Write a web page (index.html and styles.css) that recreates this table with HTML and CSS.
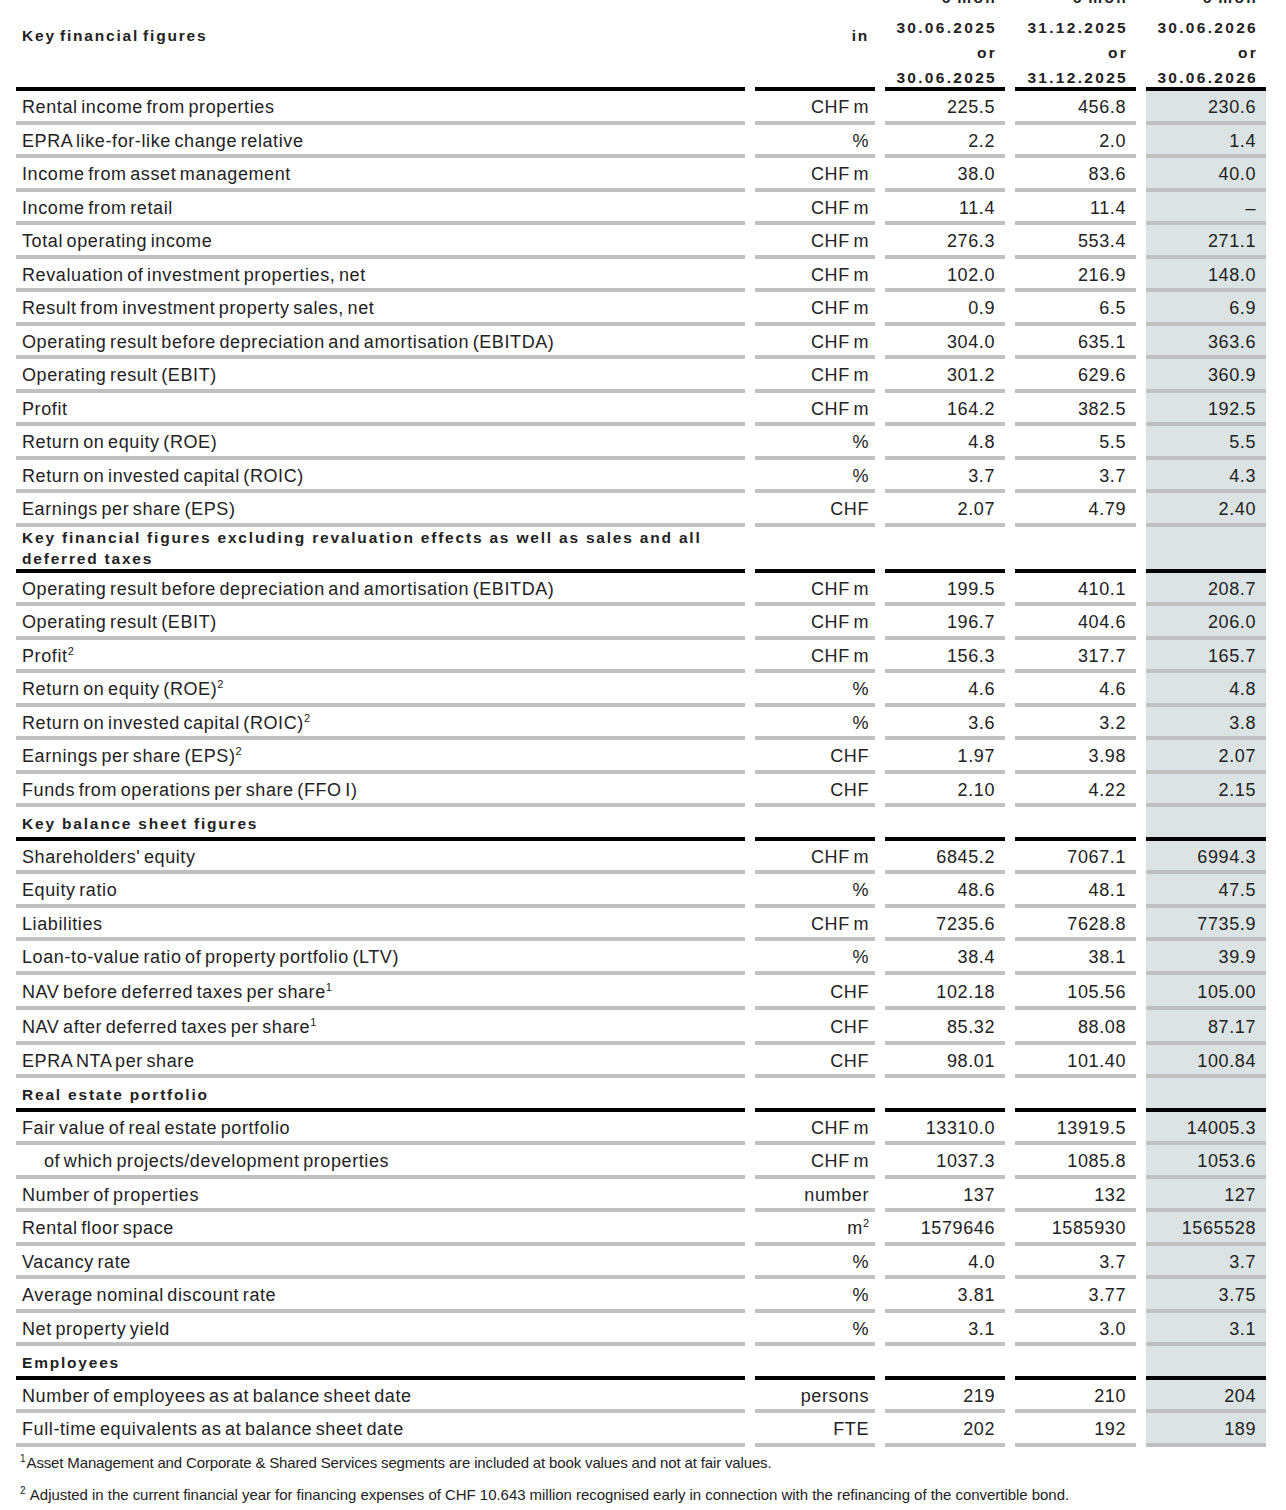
FILE: index.html
```html
<!DOCTYPE html>
<html lang="en">
<head>
    <meta charset="UTF-8">
    <title>Key financial figures</title>
    <link rel="stylesheet" href="styles.css">
</head>
<body>
    <div class="tabla">
        <div class="fila cabecera">
            <div class="titulo">Key financial figures</div>
            <div class="unidad-cab">in</div>
            <div class="fecha"><span class="periodo">6 mon</span><span>30.06.2025</span><span class="or">or</span><span>30.06.2025</span></div>
            <div class="fecha"><span class="periodo">6 mon</span><span>31.12.2025</span><span class="or">or</span><span>31.12.2025</span></div>
            <div class="fecha"><span class="periodo">6 mon</span><span>30.06.2026</span><span class="or">or</span><span>30.06.2026</span></div>
        </div>

        <div class="fila"><div>Rental income from properties</div><div>CHF m</div><div>225.5</div><div>456.8</div><div>230.6</div></div>
        <div class="fila"><div>EPRA like-for-like change relative</div><div>%</div><div>2.2</div><div>2.0</div><div>1.4</div></div>
        <div class="fila"><div>Income from asset management</div><div>CHF m</div><div>38.0</div><div>83.6</div><div>40.0</div></div>
        <div class="fila"><div>Income from retail</div><div>CHF m</div><div>11.4</div><div>11.4</div><div>–</div></div>
        <div class="fila"><div>Total operating income</div><div>CHF m</div><div>276.3</div><div>553.4</div><div>271.1</div></div>
        <div class="fila"><div>Revaluation of investment properties, net</div><div>CHF m</div><div>102.0</div><div>216.9</div><div>148.0</div></div>
        <div class="fila"><div>Result from investment property sales, net</div><div>CHF m</div><div>0.9</div><div>6.5</div><div>6.9</div></div>
        <div class="fila"><div>Operating result before depreciation and amortisation (EBITDA)</div><div>CHF m</div><div>304.0</div><div>635.1</div><div>363.6</div></div>
        <div class="fila"><div>Operating result (EBIT)</div><div>CHF m</div><div>301.2</div><div>629.6</div><div>360.9</div></div>
        <div class="fila"><div>Profit</div><div>CHF m</div><div>164.2</div><div>382.5</div><div>192.5</div></div>
        <div class="fila"><div>Return on equity (ROE)</div><div>%</div><div>4.8</div><div>5.5</div><div>5.5</div></div>
        <div class="fila"><div>Return on invested capital (ROIC)</div><div>%</div><div>3.7</div><div>3.7</div><div>4.3</div></div>
        <div class="fila"><div>Earnings per share (EPS)</div><div>CHF</div><div>2.07</div><div>4.79</div><div>2.40</div></div>

        <div class="fila seccion doble"><div>Key financial figures excluding revaluation effects as well as sales and all deferred taxes</div><div></div><div></div><div></div><div></div></div>
        <div class="fila"><div>Operating result before depreciation and amortisation (EBITDA)</div><div>CHF m</div><div>199.5</div><div>410.1</div><div>208.7</div></div>
        <div class="fila"><div>Operating result (EBIT)</div><div>CHF m</div><div>196.7</div><div>404.6</div><div>206.0</div></div>
        <div class="fila"><div>Profit<sup>2</sup></div><div>CHF m</div><div>156.3</div><div>317.7</div><div>165.7</div></div>
        <div class="fila"><div>Return on equity (ROE)<sup>2</sup></div><div>%</div><div>4.6</div><div>4.6</div><div>4.8</div></div>
        <div class="fila"><div>Return on invested capital (ROIC)<sup>2</sup></div><div>%</div><div>3.6</div><div>3.2</div><div>3.8</div></div>
        <div class="fila"><div>Earnings per share (EPS)<sup>2</sup></div><div>CHF</div><div>1.97</div><div>3.98</div><div>2.07</div></div>
        <div class="fila"><div>Funds from operations per share (FFO I)</div><div>CHF</div><div>2.10</div><div>4.22</div><div>2.15</div></div>

        <div class="fila seccion"><div>Key balance sheet figures</div><div></div><div></div><div></div><div></div></div>
        <div class="fila"><div>Shareholders' equity</div><div>CHF m</div><div>6845.2</div><div>7067.1</div><div>6994.3</div></div>
        <div class="fila"><div>Equity ratio</div><div>%</div><div>48.6</div><div>48.1</div><div>47.5</div></div>
        <div class="fila"><div>Liabilities</div><div>CHF m</div><div>7235.6</div><div>7628.8</div><div>7735.9</div></div>
        <div class="fila"><div>Loan-to-value ratio of property portfolio (LTV)</div><div>%</div><div>38.4</div><div>38.1</div><div>39.9</div></div>
        <div class="fila alta"><div>NAV before deferred taxes per share<sup>1</sup></div><div>CHF</div><div>102.18</div><div>105.56</div><div>105.00</div></div>
        <div class="fila alta"><div>NAV after deferred taxes per share<sup>1</sup></div><div>CHF</div><div>85.32</div><div>88.08</div><div>87.17</div></div>
        <div class="fila"><div>EPRA NTA per share</div><div>CHF</div><div>98.01</div><div>101.40</div><div>100.84</div></div>

        <div class="fila seccion"><div>Real estate portfolio</div><div></div><div></div><div></div><div></div></div>
        <div class="fila"><div>Fair value of real estate portfolio</div><div>CHF m</div><div>13310.0</div><div>13919.5</div><div>14005.3</div></div>
        <div class="fila"><div class="sangria">of which projects/development properties</div><div>CHF m</div><div>1037.3</div><div>1085.8</div><div>1053.6</div></div>
        <div class="fila"><div>Number of properties</div><div>number</div><div>137</div><div>132</div><div>127</div></div>
        <div class="fila"><div>Rental floor space</div><div>m<sup>2</sup></div><div>1579646</div><div>1585930</div><div>1565528</div></div>
        <div class="fila"><div>Vacancy rate</div><div>%</div><div>4.0</div><div>3.7</div><div>3.7</div></div>
        <div class="fila"><div>Average nominal discount rate</div><div>%</div><div>3.81</div><div>3.77</div><div>3.75</div></div>
        <div class="fila"><div>Net property yield</div><div>%</div><div>3.1</div><div>3.0</div><div>3.1</div></div>

        <div class="fila seccion"><div>Employees</div><div></div><div></div><div></div><div></div></div>
        <div class="fila"><div>Number of employees as at balance sheet date</div><div>persons</div><div>219</div><div>210</div><div>204</div></div>
        <div class="fila"><div>Full-time equivalents as at balance sheet date</div><div>FTE</div><div>202</div><div>192</div><div>189</div></div>
    </div>

    <div class="notas">
        <p><sup>1</sup>Asset Management and Corporate &amp; Shared Services segments are included at book values and not at fair values.</p>
        <p class="nota-larga"><sup>2</sup> Adjusted in the current financial year for financing expenses of CHF 10.643 million recognised early in connection with the refinancing of the convertible bond.</p>
    </div>
</body>
</html>
```

FILE: styles.css
```css
body {
    margin: 0;
    font-family: "Liberation Sans", Arial, sans-serif;
    color: #222;
    background: white;
    overflow: hidden;
}
.tabla {
    margin-top: -15.5px;
    padding-left: 16px;
}
.fila {
    display: grid;
    grid-template-columns: 729px 120px 120px 121px 120px;
    column-gap: 10px;
}
.fila > div {
    box-sizing: border-box;
    height: 33.5px;
    line-height: 29.5px;
    border-bottom: 4px solid #c0c0c0;
    text-align: right;
    padding: 2px 10px 0 0;
    font-size: 18px;
    letter-spacing: 0.6px;
    word-spacing: -2px;
    white-space: nowrap;
    overflow: hidden;
}
.fila > div:first-child {
    text-align: left;
    padding-right: 0;
    padding-left: 6px;
}
.fila > div:nth-child(2) {
    padding-right: 6px;
}
.fila > div:nth-child(5) {
    background-color: #dce3e4;
}
.fila.alta > div {
    height: 35px;
    line-height: 31px;
}
.fila > div.sangria {
    padding-left: 28px;
}
sup {
    font-size: 11px;
    line-height: 0;
    vertical-align: 7px;
    letter-spacing: 0;
}

/* cabecera */
.fila.cabecera > div {
    height: 106.5px;
    border-bottom-color: #000;
    font-weight: bold;
    font-size: 15.5px;
    letter-spacing: 1.8px;
    line-height: 25px;
    padding-top: 0;
    overflow: visible;
}
.fila.cabecera > div:nth-child(5) {
    background: none;
}
.fila.cabecera > .titulo,
.fila.cabecera > .unidad-cab {
    padding-top: 38px;
}
.fila.cabecera > .fecha {
    display: flex;
    flex-direction: column;
    align-items: flex-end;
    letter-spacing: 2.3px;
    padding-right: 8px;
}
.fecha .periodo {
    margin-bottom: 5px;
}

/* secciones */
.seccion > div {
    border-bottom-color: #000 !important;
}
.seccion > div:first-child {
    font-weight: bold;
    font-size: 15.5px;
    letter-spacing: 1.8px;
    word-spacing: 0;
}
.fila.seccion.doble > div {
    height: 46px;
    padding-top: 0;
}
.fila.seccion.doble > div:first-child {
    white-space: normal;
    line-height: 21px;
    padding-right: 10px;
}

/* notas */
.notas {
    padding-left: 20px;
    font-size: 15px;
    letter-spacing: -0.15px;
}
.notas p {
    margin: 0;
    line-height: 32px;
}
.notas .nota-larga {
    letter-spacing: -0.04px;
}
.notas sup {
    font-size: 10px;
    vertical-align: 6px;
    margin-right: 1px;
}
```
